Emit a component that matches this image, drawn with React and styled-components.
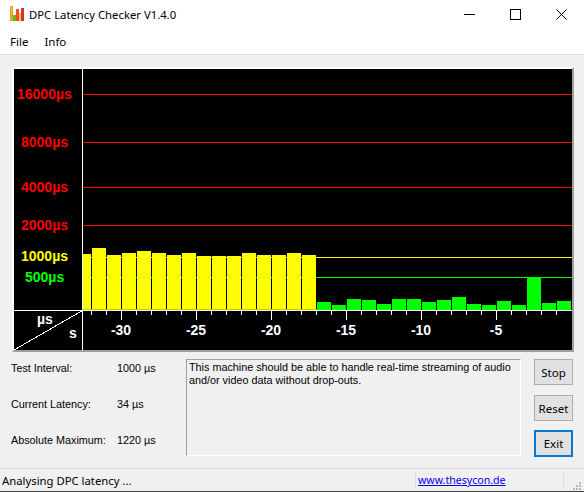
import React from "react";
import styled, { createGlobalStyle } from "styled-components";

const UI_FONT = `"Noto Sans", "Open Sans", sans-serif`;
const BODY_FONT = `"Liberation Sans", Arial, sans-serif`;

const yellowTops = [254, 248, 255, 253, 251, 253, 255, 253, 256, 256, 256, 253, 255, 255, 253, 255];
const greenTops = [302, 305, 299, 300, 304, 299, 299, 302, 300, 297, 304, 305, 301, 305, 277, 303, 301];

const levels = [
  { label: "16000µs", y: 94, color: "#ff0000", x: 17 },
  { label: "8000µs", y: 142, color: "#ff0000", x: 21 },
  { label: "4000µs", y: 187, color: "#ff0000", x: 21 },
  { label: "2000µs", y: 225, color: "#ff0000", x: 21 },
  { label: "1000µs", y: 257, color: "#ffff00", x: 21 },
  { label: "500µs", y: 277, color: "#00ff00", x: 25 },
];

const GlobalStyle = createGlobalStyle`
  html, body {
    margin: 0;
    padding: 0;
    background: #f0f0f0;
  }
`;

const Chart = () => {
  // chart coordinates are page coordinates, shifted by the viewBox
  const ticks = [];
  for (let x = 91; x < 560; x += 15) ticks.push(x);
  return (
    <ChartSvg viewBox="14 69 558 281" width="558" height="281">
      <rect x="14" y="69" width="558" height="281" fill="#000" />
      {levels.map((l) => (
        <rect key={l.y} x="83" y={l.y} width="489" height="1" fill={l.color} />
      ))}
      {yellowTops.map((top, i) => {
        const x = i === 0 ? 83 : 77 + i * 15;
        const w = i === 0 ? 8 : 14;
        return <rect key={i} x={x} y={top} width={w} height={309 - top} fill="#ffff00" />;
      })}
      <rect x="83" y="309" width="234" height="1" fill="#c8c800" />
      {greenTops.map((top, i) => (
        <rect key={i} x={317 + i * 15} y={top} width="14" height={310 - top} fill="#00ff00" />
      ))}
      <rect x="82" y="69" width="1" height="281" fill="#fff" />
      <rect x="14" y="310" width="558" height="1" fill="#fff" />
      {ticks.map((x) => (
        <rect key={x} x={x} y="311" width="1" height={(x - 121) % 75 === 0 ? 9 : 4} fill="#fff" />
      ))}
      <line x1="82.5" y1="310.5" x2="14" y2="350" stroke="#fff" strokeWidth="1" shapeRendering="crispEdges" />
      {levels.map((l) => (
        <LevelLabel key={l.label} x={l.x} y={l.y === 257 ? 261 : l.y + 5} fill={l.color}>
          {l.label}
        </LevelLabel>
      ))}
      <UnitLabel x="37" y="324">µs</UnitLabel>
      <UnitLabel x="69" y="338">s</UnitLabel>
      {[-30, -25, -20, -15, -10, -5].map((n, i) => (
        <AxisLabel key={n} x={121 + i * 75} y="335">
          {n}
        </AxisLabel>
      ))}
    </ChartSvg>
  );
};

const AppIcon = () => (
  <svg width="16" height="16" viewBox="0 0 16 16">
    <rect x="0" y="0" width="3" height="15" fill="#e8a020" />
    <rect x="1" y="0" width="1" height="9" fill="#f0c040" />
    <rect x="3" y="9" width="3" height="6" fill="#60b820" />
    <rect x="6" y="3" width="3" height="12" fill="#e85030" />
    <rect x="9" y="7" width="2" height="8" fill="#f0d040" />
    <rect x="11" y="2" width="3" height="13" fill="#d83030" />
  </svg>
);

const WindowControls = () => (
  <Controls>
    <svg width="11" height="11" viewBox="0 0 11 11">
      <rect x="0" y="5" width="11" height="1" fill="#000" />
    </svg>
    <svg width="11" height="11" viewBox="0 0 11 11">
      <rect x="0.5" y="0.5" width="10" height="10" fill="none" stroke="#000" />
    </svg>
    <svg width="11" height="11" viewBox="0 0 11 11">
      <path d="M0.5 0.5 L10.5 10.5 M10.5 0.5 L0.5 10.5" fill="none" stroke="#000" />
    </svg>
  </Controls>
);

const App = () => {
  return (
    <Window>
      <GlobalStyle />
      <TitleBar>
        <AppIcon />
        <Title>DPC Latency Checker V1.4.0</Title>
        <WindowControls />
      </TitleBar>
      <MenuBar>
        <MenuItem>File</MenuItem>
        <MenuItem>Info</MenuItem>
      </MenuBar>
      <Main>
        <ChartPanel>
          <Chart />
        </ChartPanel>
        <Lower>
          <Stats>
            <StatLabel>Test Interval:</StatLabel>
            <StatValue>1000 µs</StatValue>
            <StatLabel>Current Latency:</StatLabel>
            <StatValue>34 µs</StatValue>
            <StatLabel>Absolute Maximum:</StatLabel>
            <StatValue>1220 µs</StatValue>
          </Stats>
          <Message>
            This machine should be able to handle real-time streaming of audio
            <br />
            and/or video data without drop-outs.
          </Message>
          <Buttons>
            <Button>Stop</Button>
            <Button>Reset</Button>
            <Button $active>Exit</Button>
          </Buttons>
        </Lower>
      </Main>
      <StatusBar>
        <StatusText>Analysing DPC latency ...</StatusText>
        <StatusLink href="#">www.thesycon.de</StatusLink>
        <Grip>
          <svg width="9" height="9" viewBox="0 0 9 9" fill="#b8b8b8">
            <rect x="6" y="0" width="2" height="2" />
            <rect x="3" y="3" width="2" height="2" />
            <rect x="6" y="3" width="2" height="2" />
            <rect x="0" y="6" width="2" height="2" />
            <rect x="3" y="6" width="2" height="2" />
            <rect x="6" y="6" width="2" height="2" />
          </svg>
        </Grip>
      </StatusBar>
    </Window>
  );
};

export default App;

const Window = styled.div`
  width: 584px;
  height: 492px;
  display: flex;
  flex-direction: column;
  overflow: hidden;
  background: #f0f0f0;
  font-family: ${UI_FONT};
  font-size: 11.3px;
  color: #000;
`;

const TitleBar = styled.div`
  height: 30px;
  flex: none;
  display: flex;
  align-items: center;
  padding: 0 0 2px 10px;
  box-sizing: border-box;
  background: #fff;
`;

const Title = styled.span`
  margin-left: 3px;
`;

const Controls = styled.div`
  margin-left: auto;
  display: flex;
  gap: 35px;
  padding-right: 17px;
`;

const MenuBar = styled.div`
  height: 25px;
  flex: none;
  display: flex;
  gap: 16px;
  align-items: center;
  padding: 0 0 2px 10px;
  box-sizing: border-box;
  background: #fff;
  border-bottom: 1px solid #dcdcdc;
`;

const MenuItem = styled.span`
  font-size: 11.5px;
`;

const Main = styled.div`
  flex: 1;
  min-height: 0;
`;

const ChartPanel = styled.div`
  width: 558px;
  height: 281px;
  margin: 12px 0 0 12px;
  border-style: solid;
  border-width: 2px;
  border-color: #fff #a0a0a0 #a0a0a0 #fff;
`;

const ChartSvg = styled.svg`
  display: block;
`;

const LevelLabel = styled.text`
  font-family: ${BODY_FONT};
  font-size: 14px;
  font-weight: 700;
`;

const UnitLabel = styled.text`
  font-family: ${BODY_FONT};
  font-size: 14px;
  font-weight: 700;
  fill: #fff;
`;

const AxisLabel = styled.text`
  font-family: ${BODY_FONT};
  font-size: 14px;
  font-weight: 700;
  fill: #fff;
  text-anchor: middle;
`;

const Lower = styled.div`
  display: flex;
  margin: 7px 11px 0 11px;
  font-family: ${BODY_FONT};
  font-size: 10.8px;
`;

const Stats = styled.div`
  width: 175px;
  flex: none;
  display: grid;
  grid-template-columns: 106px 1fr;
  grid-auto-rows: 26px;
  row-gap: 10px;
  align-items: start;
  line-height: 18px;
`;

const StatLabel = styled.span`
  white-space: nowrap;
`;

const StatValue = styled.span`
  white-space: nowrap;
`;

const Message = styled.div`
  width: 335px;
  height: 97px;
  flex: none;
  box-sizing: border-box;
  padding: 1px 2px;
  line-height: 13px;
  white-space: nowrap;
  border-style: solid;
  border-width: 1px;
  border-color: #a0a0a0 #fff #fff #a0a0a0;
`;

const Buttons = styled.div`
  margin-left: 13px;
  display: flex;
  flex-direction: column;
  gap: 10px;
`;

const Button = styled.button`
  width: 39px;
  height: ${(p) => (p.$active ? "27px" : "26px")};
  padding: 0;
  box-sizing: border-box;
  font-family: ${UI_FONT};
  font-size: 11.5px;
  color: #000;
  background: #e1e1e1;
  border: ${(p) => (p.$active ? "2px solid #0078d7" : "1px solid #adadad")};
  margin-top: ${(p) => (p.$active ? "-1px" : "0")};
`;

const StatusBar = styled.div`
  height: 24px;
  flex: none;
  display: flex;
  align-items: center;
  box-sizing: border-box;
  border-top: 1px solid #dadada;
  border-bottom: 1px solid #404040;
  background: #f0f0f0;
`;

const StatusText = styled.span`
  width: 415px;
  flex: none;
  box-sizing: border-box;
  padding-left: 2px;
`;

const StatusLink = styled.a`
  width: 149px;
  flex: none;
  box-sizing: border-box;
  padding-left: 2px;
  font-size: 10.6px;
  color: #0000ee;
  border-left: 1px solid #dadada;
  border-right: 1px solid #dadada;
`;

const Grip = styled.div`
  margin-left: auto;
  padding-right: 2px;
  align-self: flex-end;
  line-height: 0;
`;
